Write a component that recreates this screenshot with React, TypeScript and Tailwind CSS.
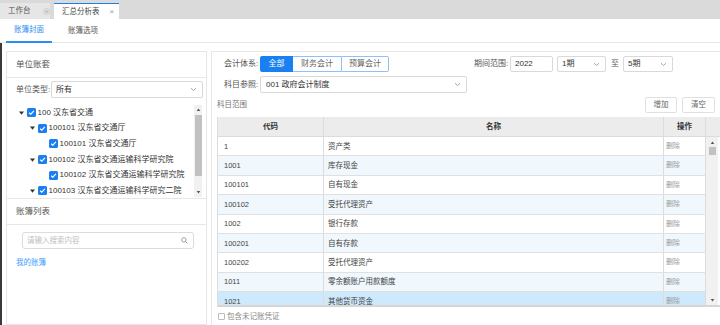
import React from 'react';

const Chevron = () => (
  <svg width="7" height="5" viewBox="0 0 7 5" className="shrink-0">
    <path d="M1 1.2l2.5 2.3L6 1.2" fill="none" stroke="#9a9a9a" strokeWidth="0.9" />
  </svg>
);

const Check = () => (
  <span className="w-[9px] h-[9px] rounded-[1.5px] bg-[#1a7ff0] flex items-center justify-center shrink-0">
    <svg width="7" height="7" viewBox="0 0 7 7">
      <path d="M1.2 3.7l1.6 1.5L5.9 1.8" fill="none" stroke="white" strokeWidth="1.2" />
    </svg>
  </span>
);

const Tri = () => (
  <svg width="5" height="4" viewBox="0 0 5 4">
    <path d="M0 0.5h5L2.5 3.7z" fill="#333" />
  </svg>
);

const tree = [
  { pad: 'pl-[12px]', arrow: true, text: '100 汉东省交通' },
  { pad: 'pl-[23px]', arrow: true, text: '100101 汉东省交通厅' },
  { pad: 'pl-[34px]', arrow: false, text: '100101 汉东省交通厅' },
  { pad: 'pl-[23px]', arrow: true, text: '100102 汉东省交通运输科学研究院' },
  { pad: 'pl-[34px]', arrow: false, text: '100102 汉东省交通运输科学研究院' },
  { pad: 'pl-[23px]', arrow: true, text: '100103 汉东省交通运输科学研究二院' },
];

const rows = [
  ['1', '资产类'],
  ['1001', '库存现金'],
  ['100101', '自有现金'],
  ['100102', '受托代理资产'],
  ['1002', '银行存款'],
  ['100201', '自有存款'],
  ['100202', '受托代理资产'],
  ['1011', '零余额账户用款额度'],
  ['1021', '其他货币资金'],
];

const rowBg = (i: number) =>
  i === 8 ? 'bg-[#cde9fb]' : i % 2 === 1 ? 'bg-[#f0f7fd]' : 'bg-white';

export default function App() {
  return (
    <div className="w-[720px] h-[325px] overflow-hidden bg-white text-[#333] font-['Liberation_Sans','Noto_Sans_CJK_SC',sans-serif] flex flex-col">
      {/* Top tab bar */}
      <div className="h-[19px] bg-[#dadada] flex items-end shrink-0">
        <div className="w-[50px] h-[16px] bg-[#e6e6e6] flex items-center pl-[8px] text-[7.5px] text-[#555]">
          <span>工作台</span>
          <svg width="7" height="7" viewBox="0 0 7 7" className="ml-[12px]">
            <circle cx="3.5" cy="3.5" r="3" fill="none" stroke="#c4c4c4" strokeWidth="0.8" />
            <circle cx="3.5" cy="3.5" r="1.6" fill="#c4c4c4" />
          </svg>
        </div>
        <div className="ml-[4px] w-[65px] h-[16px] bg-white border-t border-[#1a7ff0] flex items-center pl-[8px] text-[7.5px] text-[#444]">
          <span>汇总分析表</span>
          <span className="ml-[10px] text-[8px] text-[#999]">×</span>
        </div>
      </div>

      {/* Sub tabs */}
      <div className="h-[24px] border-b border-[#e6e6e6] flex items-stretch shrink-0">
        <div className="ml-[6px] w-[46px] border-b-2 border-[#2d8cf0] -mb-px flex items-center justify-center text-[7.5px] text-[#2d8cf0]">
          账簿封面
        </div>
        <div className="ml-[8px] w-[46px] flex items-center justify-center text-[7.5px] text-[#555]">
          账簿选项
        </div>
      </div>

      {/* Main */}
      <div className="flex-1 flex border-l-2 border-[#3a3a3a] pl-[4px] pt-[8px] gap-[4px] min-h-0">
        {/* Left card */}
        <div className="w-[201px] shrink-0 border border-[#e6e6e6] flex flex-col">
          <div className="h-[26px] border-b border-[#e6e6e6] flex items-center pl-[9px] text-[8.5px] text-[#555] shrink-0">
            单位账套
          </div>
          <div className="pt-[3px] flex items-center pl-[9px] shrink-0">
            <span className="w-[35px] text-[8px] text-[#555]">单位类型:</span>
            <div className="w-[152px] h-[17px] border border-[#d9d9d9] rounded-[2px] flex items-center justify-between pl-[4px] pr-[5px] text-[8px] text-[#333]">
              <span>所有</span>
              <Chevron />
            </div>
          </div>
          <div className="mt-[5px] h-[96px] flex shrink-0 overflow-hidden border-b border-[#e6e6e6]">
            <div className="flex-1 pt-[2px]">
              {tree.map((t, i) => (
                <div key={i} className={`h-[15.6px] flex items-center ${t.pad}`}>
                  <span className="w-[8px] flex items-center justify-start shrink-0">{t.arrow ? <Tri /> : null}</span>
                  <Check />
                  <span className="ml-[1.5px] text-[8px] text-[#333] whitespace-nowrap">{t.text}</span>
                </div>
              ))}
            </div>
            <div className="w-[8px] mr-[4px] mt-[2px] mb-[1px] bg-[#f1f1f1] flex flex-col items-center shrink-0">
              <svg width="5" height="6" viewBox="0 0 5 6" className="mt-[2px]"><path d="M2.5 1.5L4.3 4H0.7z" fill="#555" /></svg>
              <div className="w-[7px] h-[61px] bg-[#c1c1c1] mt-[2px]" />
              <div className="flex-1" />
              <svg width="5" height="6" viewBox="0 0 5 6" className="mb-[2px]"><path d="M0.7 2h3.6L2.5 4.5z" fill="#555" /></svg>
            </div>
          </div>
          <div className="h-[26px] border-b border-[#e6e6e6] flex items-center pl-[9px] text-[8.5px] text-[#555] shrink-0">
            账簿列表
          </div>
          <div className="mt-[7px] ml-[15px] w-[172px] h-[17px] border border-[#dcdcdc] rounded-[3px] flex items-center justify-between pl-[4px] pr-[5px] shrink-0">
            <span className="text-[7.5px] text-[#c0c0c0]">请输入搜索内容</span>
            <svg width="7" height="7" viewBox="0 0 8 8">
              <circle cx="3.3" cy="3.3" r="2.5" fill="none" stroke="#888" strokeWidth="0.9" />
              <path d="M5.2 5.2L7.3 7.3" stroke="#888" strokeWidth="1" />
            </svg>
          </div>
          <div className="mt-[8px] pl-[9px] text-[7.5px] text-[#3c9cff]">我的账簿</div>
        </div>

        {/* Right card */}
        <div className="flex-1 border-t border-l border-[#e6e6e6] pl-[5px] pt-[4px] flex flex-col min-w-0">
          {/* Row 1 */}
          <div className="h-[16px] flex items-center shrink-0">
            <span className="ml-[7px] w-[36px] text-[8px] text-[#555]">会计体系:</span>
            <div className="flex h-[16px] text-[8px]">
              <div className="w-[33px] bg-[#1a7ff0] text-white flex items-center justify-center rounded-l-[2px]">全部</div>
              <div className="w-[48px] border-y border-[#8fc1f7] text-[#666] flex items-center justify-center">财务会计</div>
              <div className="w-[48px] border border-[#8fc1f7] text-[#666] flex items-center justify-center rounded-r-[2px]">预算会计</div>
            </div>
            <span className="ml-[85px] w-[36px] text-[8px] text-[#555]">期间范围:</span>
            <div className="w-[43px] h-[16px] border border-[#d9d9d9] rounded-[2px] flex items-center pl-[4px] text-[8px] text-[#333]">2022</div>
            <div className="ml-[4px] w-[49px] h-[16px] border border-[#d9d9d9] rounded-[2px] flex items-center justify-between pl-[4px] pr-[5px] text-[8px] text-[#333]">
              <span>1期</span>
              <Chevron />
            </div>
            <span className="ml-[5px] w-[12px] text-[8px] text-[#555]">至</span>
            <div className="w-[50px] h-[16px] border border-[#d9d9d9] rounded-[2px] flex items-center justify-between pl-[4px] pr-[5px] text-[8px] text-[#333]">
              <span>5期</span>
              <Chevron />
            </div>
          </div>
          {/* Row 2 */}
          <div className="mt-[4px] h-[17px] flex items-center shrink-0">
            <span className="ml-[7px] w-[36px] text-[8px] text-[#555]">科目参照:</span>
            <div className="w-[207px] h-[17px] border border-[#d9d9d9] rounded-[2px] flex items-center justify-between pl-[5px] pr-[5px] text-[8px] text-[#333]">
              <span>001 政府会计制度</span>
              <Chevron />
            </div>
          </div>
          {/* Row 3 */}
          <div className="mt-[4px] h-[16px] w-[500px] flex items-center shrink-0">
            <span className="text-[7.5px] text-[#777]">科目范围</span>
            <div className="ml-auto flex gap-[5px] mr-[2px]">
              <div className="w-[32px] h-[16px] border border-[#e0e0e0] rounded-[2px] flex items-center justify-center text-[7.5px] text-[#666]">增加</div>
              <div className="w-[33px] h-[16px] border border-[#e0e0e0] rounded-[2px] flex items-center justify-center text-[7.5px] text-[#666]">清空</div>
            </div>
          </div>
          {/* Table */}
          <div className="mt-[4px] w-[503px] border-l border-[#dcdcdc] flex flex-col shrink-0">
            <div className="h-[20px] flex bg-[#ececec] border-b border-[#dcdcdc] text-[7.5px] font-bold text-[#333]">
              <div className="w-[106px] border-r border-[#dcdcdc] flex items-center justify-center">代码</div>
              <div className="w-[340px] border-r border-[#dcdcdc] flex items-center justify-center">名称</div>
              <div className="w-[42px] border-r border-[#dcdcdc] flex items-center justify-center">操作</div>
              <div className="flex-1" />
            </div>
            <div className="h-[170px] flex border-b-2 border-[#d6d6d6] overflow-hidden">
              <div className="w-[488px] flex flex-col shrink-0">
                {rows.map((r, i) => (
                  <div key={i} className={`h-[19.4px] shrink-0 flex border-b border-[#e0e0e0] text-[7.5px] text-[#444] ${rowBg(i)}`}>
                    <div className="w-[106px] border-r border-[#dcdcdc] flex items-center pl-[6px]">{r[0]}</div>
                    <div className="w-[340px] border-r border-[#dcdcdc] flex items-center pl-[4px]">{r[1]}</div>
                    <div className="w-[42px] border-r border-[#dcdcdc] flex items-center pl-[2px] text-[7px] text-[#999]">删除</div>
                  </div>
                ))}
              </div>
              <div className="w-[12px] bg-[#f1f1f1] flex flex-col items-center shrink-0">
                <svg width="5" height="6" viewBox="0 0 5 6" className="mt-[3px]"><path d="M2.5 1.5L4.3 4H0.7z" fill="#555" /></svg>
                <div className="w-[7px] h-[8px] bg-[#c1c1c1] mt-[1px]" />
                <div className="flex-1" />
                <svg width="5" height="6" viewBox="0 0 5 6" className="mb-[2px]"><path d="M0.7 2h3.6L2.5 4.5z" fill="#555" /></svg>
              </div>
            </div>
          </div>
          <div className="mt-[4px] flex items-center pl-[1px]">
            <span className="w-[7px] h-[7px] border border-[#bbb] rounded-[1px] bg-white" />
            <span className="ml-[2px] text-[7.5px] text-[#888]">包含未记账凭证</span>
          </div>
        </div>
      </div>
    </div>
  );
}
